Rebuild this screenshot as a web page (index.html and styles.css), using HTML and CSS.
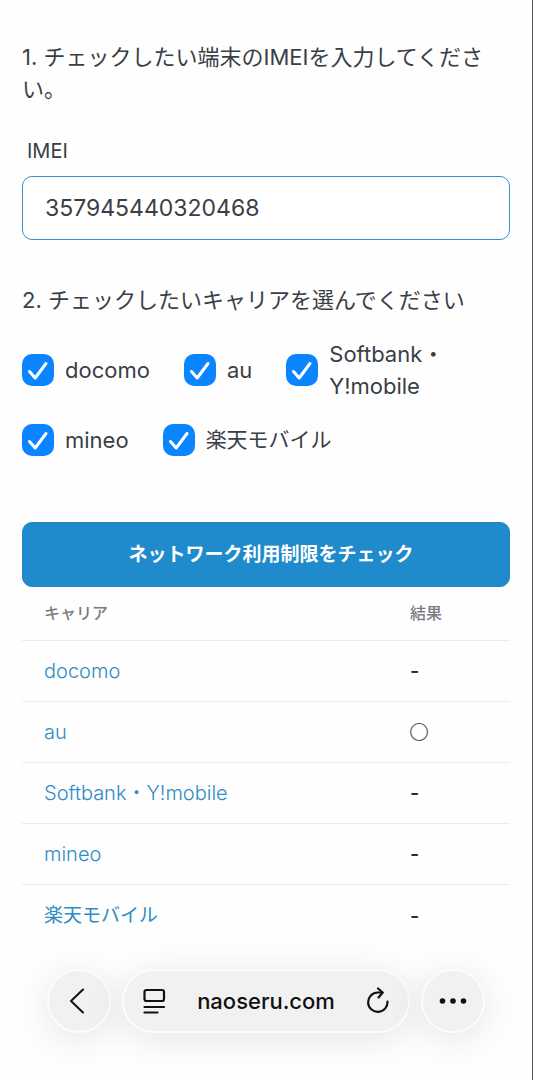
FILE: index.html
```html
<!DOCTYPE html>
<html lang="ja">
<head>
<meta charset="utf-8">
<meta name="viewport" content="width=device-width, initial-scale=1">
<title>ネットワーク利用制限チェック</title>
<link rel="stylesheet" href="styles.css">
</head>
<body>
<main class="content">
  <form class="form">
    <p class="step">1. チェックしたい端末のIMEIを入力してください。</p>
    <label class="field-label" for="imei">IMEI</label>
    <input class="field" id="imei" type="text" inputmode="numeric" value="357945440320468">
    <p class="step step-carrier" id="carrier-title">2. チェックしたいキャリアを選んでください</p>
    <div class="carriers" role="group" aria-labelledby="carrier-title">
      <label class="carrier"><input class="check" type="checkbox" checked><span>docomo</span></label>
      <label class="carrier"><input class="check" type="checkbox" checked><span>au</span></label>
      <label class="carrier"><input class="check" type="checkbox" checked><span>Softbank・<br>Y!mobile</span></label>
      <label class="carrier"><input class="check" type="checkbox" checked><span>mineo</span></label>
      <label class="carrier"><input class="check" type="checkbox" checked><span class="carrier-ja">楽天モバイル</span></label>
    </div>
    <button class="submit" type="button">ネットワーク利用制限をチェック</button>
  </form>
  <table class="results">
    <thead>
      <tr><th class="name" scope="col">キャリア</th><th scope="col">結果</th></tr>
    </thead>
    <tbody>
      <tr><td><a href="#docomo">docomo</a></td><td class="result">-</td></tr>
      <tr><td><a href="#au">au</a></td><td class="ok">◯</td></tr>
      <tr><td><a href="#softbank">Softbank・Y!mobile</a></td><td class="result">-</td></tr>
      <tr><td><a href="#mineo">mineo</a></td><td class="result">-</td></tr>
      <tr><td><a class="link-ja" href="#rakuten">楽天モバイル</a></td><td class="result">-</td></tr>
    </tbody>
  </table>
</main>
<nav class="toolbar" aria-label="ブラウザ">
  <button class="glass round" type="button" aria-label="戻る">
    <svg width="28" height="28" viewBox="0 0 28 28" fill="none" stroke="#111" stroke-width="2" stroke-linecap="round" stroke-linejoin="round"><path d="M18 2.500L6 14L18 25.500"/></svg>
  </button>
  <div class="glass address">
    <button class="tool" type="button" aria-label="ページメニュー">
      <svg width="24" height="28" viewBox="0 0 24 28" fill="none" stroke="#111" stroke-width="2.200" stroke-linecap="round"><rect x="2.500" y="3" width="19.500" height="11" rx="2"/><path d="M2.500 20H22M2.500 25.500H15.500"/></svg>
    </button>
    <button class="tool url" type="button">naoseru.com</button>
    <button class="tool" type="button" aria-label="再読み込み">
      <svg width="24" height="28" viewBox="0 0 24 28" fill="none" stroke="#111" stroke-width="2.200" stroke-linecap="round" stroke-linejoin="round"><path d="M21.500 14.500A9.700 9.700 0 1 1 11.800 5.500H16.500M12 1.500L16.800 5.500L12.500 10.500"/></svg>
    </button>
  </div>
  <button class="glass round" type="button" aria-label="その他">
    <svg width="28" height="28" viewBox="0 0 28 28" fill="#111"><circle cx="3.500" cy="14" r="2.800"/><circle cx="14" cy="14" r="2.800"/><circle cx="24.500" cy="14" r="2.800"/></svg>
  </button>
</nav>
</body>
</html>
```
FILE: styles.css
```css
* {
  box-sizing: border-box;
}

body {
  margin: 0;
  min-height: 100vh;
  display: flex;
  flex-direction: column;
  background: #fefefe;
  border-right: 1px solid #55575b;
  color: #3a3e47;
  font-family: Inter, "Noto Sans CJK JP", sans-serif;
  font-size: 22px;
  font-weight: 400;
  line-height: 32px;
}

button,
input {
  font: inherit;
  color: inherit;
  margin: 0;
}

.content {
  padding: 41px 22px 0;
}

.form {
  display: flex;
  flex-direction: column;
}

.step {
  margin: 0;
  padding-right: 8px;
}

.step-carrier {
  padding-top: 44px;
}

.field-label {
  padding: 30px 5px 9px;
  font-size: 20px;
}

.field {
  width: 100%;
  height: 64px;
  padding: 0 22px;
  background: #fff;
  border: 1px solid #3b8fc4;
  border-radius: 10px;
  font-size: 23px;
}

.carriers {
  display: flex;
  flex-wrap: wrap;
  align-items: center;
  gap: 22px 34px;
  padding: 22px 0 66px;
}

.carrier {
  display: flex;
  align-items: center;
  gap: 11px;
}

.carrier-ja {
  font-size: 21px;
}

.check {
  appearance: none;
  flex: none;
  width: 32px;
  height: 32px;
  border: 1px solid #aaa;
  border-radius: 10px;
}

.check:checked {
  border: 0;
  background: #0a84ff url("data:image/svg+xml,%3Csvg xmlns='http://www.w3.org/2000/svg' viewBox='0 0 32 32' fill='none' stroke='white' stroke-width='3' stroke-linecap='round' stroke-linejoin='round'%3E%3Cpath d='M7.500 17.500L13.200 24L24 9.500'/%3E%3C/svg%3E") center / 32px;
}

.submit {
  height: 65px;
  padding: 0 0 0 10px;
  border: 1px solid #2483c0;
  border-radius: 10px;
  background: #1f8bcc;
  color: #fff;
  font-size: 19px;
  font-weight: 700;
}

.results {
  width: 100%;
  border-collapse: separate;
  border-spacing: 0;
  font-size: 20px;
}

th {
  padding: 14px 22px 15px;
  border-bottom: 1px solid #ececee;
  color: #7b7c83;
  font-size: 16px;
  font-weight: 500;
  line-height: 24px;
  text-align: left;
}

.name {
  width: 75%;
}

td {
  padding: 14px 22px;
  border-bottom: 1px solid #ececee;
}

tr:last-child td {
  border-bottom: 0;
}

td a {
  color: #2f8bc4;
  font-weight: 300;
  text-decoration: none;
}

.link-ja {
  font-size: 19px;
  font-weight: 400;
}

.result {
  color: #22252b;
  font-weight: 500;
}

.ok {
  color: #55575b;
  font-size: 13px;
}

.toolbar {
  display: flex;
  gap: 11px;
  margin-top: auto;
  padding: 22px 47px 47px;
}

.glass {
  height: 64px;
  border: 2px solid #fcfcfc;
  border-radius: 32px;
  background: #f1f1f1;
  box-shadow: 0 6px 36px rgba(0, 0, 0, 0.1);
  color: #111;
}

.round {
  flex: none;
  width: 64px;
  padding: 0;
  display: grid;
  place-items: center;
}

.address {
  flex: 1;
  display: flex;
  align-items: center;
  justify-content: space-between;
  padding: 0 18px;
}

.tool {
  display: flex;
  padding: 0;
  border: 0;
  background: none;
}

.url {
  font-weight: 500;
}
```
